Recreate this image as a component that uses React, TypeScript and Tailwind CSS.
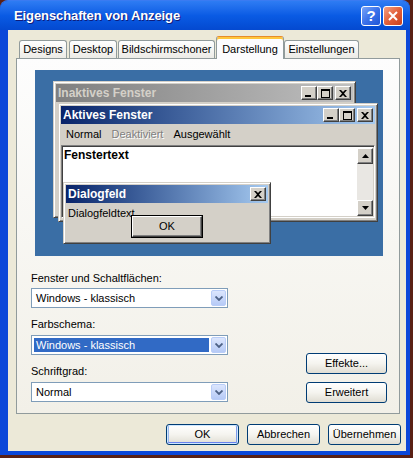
import React from "react";

const raised =
  "border border-t-white border-l-white border-r-[#404040] border-b-[#404040] shadow-[inset_-1px_-1px_0_#808080]";
const frame =
  "border border-t-[#D4D0C8] border-l-[#D4D0C8] border-r-[#404040] border-b-[#404040] shadow-[inset_1px_1px_0_#fff,inset_-1px_-1px_0_#808080]";
const sunken =
  "border border-t-[#808080] border-l-[#808080] border-r-white border-b-white shadow-[inset_1px_1px_0_#404040,inset_-1px_-1px_0_#D4D0C8]";

const CapButton = ({ kind }: { kind: "min" | "max" | "close" }) => (
  <div
    className={`w-[16px] h-[14px] bg-[#D4D0C8] flex items-center justify-center ${raised}`}
  >
    {kind === "min" && (
      <svg width="8" height="8" viewBox="0 0 8 8">
        <rect x="0" y="6" width="6" height="2" fill="#000" />
      </svg>
    )}
    {kind === "max" && (
      <svg width="9" height="9" viewBox="0 0 9 9">
        <path d="M0 0h9v9H0zM1 2v6h7V2z" fill="#000" fillRule="evenodd" />
      </svg>
    )}
    {kind === "close" && (
      <svg width="8" height="7" viewBox="0 0 8 7">
        <path
          d="M0 0h2l2 2 2-2h2L5 3.5 8 7H6L4 5 2 7H0l3-3.5z"
          fill="#000"
        />
      </svg>
    )}
  </div>
);

const Combo = ({ value, selected }: { value: string; selected?: boolean }) => (
  <div className="h-[20px] w-[197px] bg-white border border-[#7F9DB9] flex p-px">
    <div className="flex-1 flex items-stretch pr-px">
      {selected ? (
        <span className="flex-1 m-px bg-[#316AC5] text-white flex items-center pl-[2px]">
          {value}
        </span>
      ) : (
        <span className="flex items-center pl-[3px]">{value}</span>
      )}
    </div>
    <div className="w-[15px] rounded-[2px] border border-[#B9CDF8] bg-linear-to-b from-[#DCE6FD] to-[#B6CAF6] flex items-center justify-center">
      <svg width="8" height="5" viewBox="0 0 8 5">
        <path d="M0.5 0.5L4 4l3.5-3.5" stroke="#4D6185" strokeWidth="1.8" fill="none" />
      </svg>
    </div>
  </div>
);

const XpButton = ({
  label,
  isDefault,
}: {
  label: string;
  isDefault?: boolean;
}) => (
  <div
    className={`w-[73px] h-[21px] rounded-[3px] border border-[#003C74] bg-linear-to-b from-white via-[#F5F4EF] to-[#E0DDD3] flex items-center justify-center text-[11px] text-black ${
      isDefault
        ? "shadow-[inset_0_0_0_1px_#CEE7FF,inset_0_-2px_0_#6982EE,inset_2px_0_0_#9DB9EB,inset_-2px_0_0_#7F9BE8]"
        : ""
    }`}
  >
    {label}
  </div>
);

const Preview = () => (
  <div className="relative w-[348px] h-[186px] bg-[#3A6EA5] ml-[18px] mt-[11px] overflow-hidden text-black">
    {/* inactive window */}
    <div
      className={`absolute left-[18px] top-[11px] w-[303px] h-[137px] bg-[#D4D0C8] p-[2px] ${frame}`}
    >
      <div className="h-[18px] flex items-center pl-[2px] pr-[2px] bg-linear-to-r from-[#808080] to-[#C0C0C0]">
        <span className="text-[12px] font-bold text-[#D4D0C8]">Inaktives Fenster</span>
        <div className="ml-auto flex items-center">
          <CapButton kind="min" />
          <CapButton kind="max" />
          <div className="ml-[2px]">
            <CapButton kind="close" />
          </div>
        </div>
      </div>
    </div>

    {/* active window */}
    <div
      className={`absolute left-[23px] top-[33px] w-[320px] h-[119px] bg-[#D4D0C8] p-[2px] ${frame}`}
    >
      <div className="h-[18px] flex items-center pl-[2px] pr-[2px] bg-linear-to-r from-[#0A246A] to-[#A6CAF0]">
        <span className="text-[12px] font-bold text-white">Aktives Fenster</span>
        <div className="ml-auto flex items-center">
          <CapButton kind="min" />
          <CapButton kind="max" />
          <div className="ml-[2px]">
            <CapButton kind="close" />
          </div>
        </div>
      </div>
      <div className="h-[21px] flex items-center gap-[10px] pl-[5px] text-[11px]">
        <span>Normal</span>
        <span className="text-[#808080] [text-shadow:1px_1px_0_#fff]">Deaktiviert</span>
        <span>Ausgewählt</span>
      </div>
      <div className={`h-[73px] bg-white flex ${sunken}`}>
        <div className="flex-1 pl-[2px] pt-[2px] text-[12px] font-bold leading-[14px]">
          Fenstertext
        </div>
        <div className="w-[16px] flex flex-col mt-[2px] mb-[1px] mr-[1px]">
          <div
            className={`h-[16px] bg-[#D4D0C8] flex items-center justify-center ${raised}`}
          >
            <svg width="7" height="4" viewBox="0 0 7 4">
              <path d="M3.5 0L7 4H0z" fill="#000" />
            </svg>
          </div>
          <div className="flex-1 bg-[#E9E7E3]" />
          <div
            className={`h-[16px] bg-[#D4D0C8] flex items-center justify-center ${raised}`}
          >
            <svg width="7" height="4" viewBox="0 0 7 4">
              <path d="M0 0h7L3.5 4z" fill="#000" />
            </svg>
          </div>
        </div>
      </div>
    </div>

    {/* dialog */}
    <div
      className={`absolute left-[28px] top-[112px] w-[208px] h-[62px] bg-[#D4D0C8] p-[2px] ${frame}`}
    >
      <div className="h-[18px] flex items-center pl-[2px] pr-[2px] bg-linear-to-r from-[#0A246A] to-[#A6CAF0]">
        <span className="text-[12px] font-bold text-white">Dialogfeld</span>
        <div className="ml-auto">
          <CapButton kind="close" />
        </div>
      </div>
      <div className="pl-[2px] pt-[4px] text-[11px] leading-[13px]">Dialogfeldtext</div>
      <div className="absolute left-[67px] top-[32px] w-[72px] h-[23px] border border-black">
        <div
          className={`w-full h-full bg-[#D4D0C8] flex items-center justify-center text-[11px] ${raised}`}
        >
          OK
        </div>
      </div>
    </div>
  </div>
);

const App = () => {
  return (
    <div className="w-[413px] h-[458px] overflow-hidden bg-[#5A2014] font-['Liberation_Sans',Arial,sans-serif] text-black">
      <div className="w-[410px] h-[455px] flex flex-col bg-[#0B47D9] rounded-t-[8px] border-t border-[#3A7BF2]">
        {/* title bar */}
        <div className="h-[29px] flex items-center pl-[14px] pr-[7px] rounded-t-[8px] bg-linear-to-b from-[#2E7CF3] via-[#0A5BE4] to-[#0449D0]">
          <span className="text-[13px] font-bold text-white tracking-[-0.1px] [text-shadow:1px_1px_0_#0F1C7A]">
            Eigenschaften von Anzeige
          </span>
          <div className="ml-auto flex items-center gap-[2px]">
            <div className="w-[20px] h-[20px] rounded-[3px] border border-white bg-linear-to-br from-[#7AA5F8] via-[#3C72EA] to-[#1E55D6] flex items-center justify-center text-white text-[15px] font-bold leading-none">
              ?
            </div>
            <div className="w-[20px] h-[20px] rounded-[3px] border border-white bg-linear-to-br from-[#F2A083] via-[#E2603A] to-[#C7401B] flex items-center justify-center">
              <svg width="10" height="10" viewBox="0 0 10 10">
                <path d="M1 1l8 8M9 1l-8 8" stroke="#fff" strokeWidth="2" />
              </svg>
            </div>
          </div>
        </div>

        {/* body */}
        <div className="flex-1 ml-[8px] mr-[4px] mb-[4px] bg-[#ECE9D8] pt-[6px] text-[11px]">
          {/* tabs */}
          <div className="relative z-10 h-[23px] ml-[11px] flex items-end">
            <div className="w-[48px] h-[18px] mb-px border border-b-0 border-[#919B9C] rounded-t-[3px] bg-linear-to-b from-white to-[#ECEBE6] flex items-center justify-center">
              Designs
            </div>
            <div className="w-[48px] h-[18px] mb-px ml-[2px] border border-b-0 border-[#919B9C] rounded-t-[3px] bg-linear-to-b from-white to-[#ECEBE6] flex items-center justify-center">
              Desktop
            </div>
            <div className="w-[97px] h-[18px] mb-px ml-px border border-b-0 border-[#919B9C] rounded-t-[3px] bg-linear-to-b from-white to-[#ECEBE6] flex items-center justify-center">
              Bildschirmschoner
            </div>
            <div className="w-[68px] h-[23px] ml-px border border-b-0 border-[#919B9C] border-t-[#E68B2C] rounded-t-[3px] bg-[#FCFCFE] shadow-[inset_0_2px_0_#FFC73C] flex items-start justify-center pt-[4px]">
              Darstellung
            </div>
            <div className="w-[75px] h-[18px] mb-px border border-b-0 border-[#919B9C] rounded-t-[3px] bg-linear-to-b from-white to-[#ECEBE6] flex items-center justify-center">
              Einstellungen
            </div>
          </div>

          {/* panel */}
          <div className="-mt-px ml-[8px] w-[384px] h-[356px] border border-[#919B9C] bg-linear-to-b from-[#FDFDFD] to-[#F2F0E8] flex flex-col">
            <Preview />
            <div className="flex items-end">
              <div className="ml-[14px] w-[197px] flex flex-col">
                <div className="mt-[16px] h-[13px] leading-[13px]">Fenster und Schaltflächen:</div>
                <div className="mt-[3px]">
                  <Combo value="Windows - klassisch" />
                </div>
                <div className="mt-[10px] h-[13px] leading-[13px]">Farbschema:</div>
                <div className="mt-[4px]">
                  <Combo value="Windows - klassisch" selected />
                </div>
                <div className="mt-[10px] h-[13px] leading-[13px]">Schriftgrad:</div>
                <div className="mt-[4px]">
                  <Combo value="Normal" />
                </div>
              </div>
              <div className="ml-auto mr-[12px] mb-[-1px] flex flex-col gap-[8px]">
                <div className="w-[81px] h-[21px] rounded-[3px] border border-[#003C74] bg-linear-to-b from-white via-[#F5F4EF] to-[#E0DDD3] flex items-center justify-center">
                  Effekte...
                </div>
                <div className="w-[81px] h-[21px] rounded-[3px] border border-[#003C74] bg-linear-to-b from-white via-[#F5F4EF] to-[#E0DDD3] flex items-center justify-center">
                  Erweitert
                </div>
              </div>
            </div>
          </div>

          {/* dialog buttons */}
          <div className="mt-[10px] flex justify-end gap-[8px] pr-[5px]">
            <XpButton label="OK" isDefault />
            <XpButton label="Abbrechen" />
            <XpButton label="Übernehmen" />
          </div>
        </div>
      </div>
    </div>
  );
};

export default App;
